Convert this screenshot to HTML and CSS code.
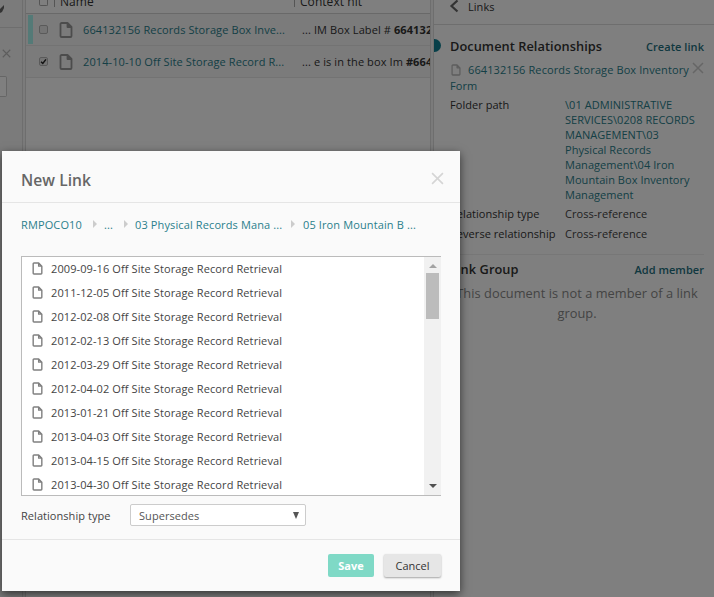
FILE: index.html
```html
<!DOCTYPE html>
<html lang="en">
<head>
<meta charset="utf-8">
<title>New Link</title>
<link rel="stylesheet" href="styles.css">
</head>
<body>
<svg class="defs" width="0" height="0">
  <symbol id="doc" viewBox="0 0 14 16">
    <path d="M2.5 1h6L12.5 5v9a1 1 0 0 1-1 1h-9a1 1 0 0 1-1-1V2a1 1 0 0 1 1-1z M8.5 1v4h4" fill="none" stroke="currentColor" stroke-width="1.8" stroke-linejoin="round"/>
  </symbol>
  <symbol id="x" viewBox="0 0 12 12">
    <path d="M1 1l10 10M11 1L1 11" fill="none" stroke="currentColor" stroke-width="1.5"/>
  </symbol>
</svg>
<div class="app">
  <aside class="rail">
    <div class="rail-top"><svg class="rail-glyph" viewBox="3 0 5 10"><path d="M7 0L3 4 1 9l4-2 2-4z" fill="currentColor"/></svg></div>
    <div class="rail-body">
      <svg class="rail-x"><use href="#x"/></svg>
      <div class="rail-input"></div>
    </div>
  </aside>
  <main class="results">
    <div class="results-head">
      <span class="head-check"></span>
      <span class="head-name">Name</span>
      <span class="head-hit">Context hit</span>
    </div>
    <div class="row">
      <span class="row-mark row-mark-on"></span>
      <span class="check"></span>
      <svg class="row-doc"><use href="#doc"/></svg>
      <a class="row-name">664132156 Records Storage Box Inve...</a>
      <span class="row-hit">... IM Box Label # <b>664132</b></span>
    </div>
    <div class="row">
      <span class="row-mark"></span>
      <span class="check check-on"><svg viewBox="0 0 8 8"><path d="M1.2 4.2l2 2 3.6-4.6" fill="none" stroke="currentColor" stroke-width="1.7"/></svg></span>
      <svg class="row-doc"><use href="#doc"/></svg>
      <a class="row-name">2014-10-10 Off Site Storage Record R...</a>
      <span class="row-hit">... e is in the box Im <b>#664</b></span>
    </div>
  </main>
  <section class="links">
    <header class="links-head">
      <svg class="chev" viewBox="0 0 10 14"><path d="M8.5 1.5L2.5 7l6 5.5" fill="none" stroke="currentColor" stroke-width="2.2"/></svg>
      <span>Links</span>
    </header>
    <span class="links-dot"></span>
    <div class="section-head section-first">
      <h2>Document Relationships</h2>
      <a class="action">Create link</a>
    </div>
    <div class="linked">
      <svg class="linked-doc"><use href="#doc"/></svg><a>664132156 Records Storage Box Inventory Form</a>
      <svg class="linked-x"><use href="#x"/></svg>
    </div>
    <dl class="props">
      <dt>Folder path</dt>
      <dd class="prop-link">\01 ADMINISTRATIVE SERVICES\0208 RECORDS MANAGEMENT\03 Physical Records Management\04 Iron Mountain Box Inventory Management</dd>
      <dt>Relationship type</dt>
      <dd>Cross-reference</dd>
      <dt>Reverse relationship</dt>
      <dd>Cross-reference</dd>
    </dl>
    <div class="section-head section-second">
      <h2>Link Group</h2>
      <a class="action">Add member</a>
    </div>
    <p class="empty">This document is not a member of a link group.</p>
  </section>
</div>
<div class="scrim"></div>
<div class="modal">
  <div class="modal-head">
    <h1>New Link</h1>
    <svg class="modal-x"><use href="#x"/></svg>
  </div>
  <div class="modal-body">
    <nav class="crumbs">
      <a class="crumb-1">RMPOCO10</a><i class="sep"></i>
      <a class="crumb-2">...</a><i class="sep"></i>
      <a class="crumb-3">03 Physical Records Mana ...</a><i class="sep sep-last"></i>
      <a>05 Iron Mountain B ...</a>
    </nav>
    <div class="picker">
      <ul class="files">
        <li><svg><use href="#doc"/></svg>2009-09-16 Off Site Storage Record Retrieval</li>
        <li><svg><use href="#doc"/></svg>2011-12-05 Off Site Storage Record Retrieval</li>
        <li><svg><use href="#doc"/></svg>2012-02-08 Off Site Storage Record Retrieval</li>
        <li><svg><use href="#doc"/></svg>2012-02-13 Off Site Storage Record Retrieval</li>
        <li><svg><use href="#doc"/></svg>2012-03-29 Off Site Storage Record Retrieval</li>
        <li><svg><use href="#doc"/></svg>2012-04-02 Off Site Storage Record Retrieval</li>
        <li><svg><use href="#doc"/></svg>2013-01-21 Off Site Storage Record Retrieval</li>
        <li><svg><use href="#doc"/></svg>2013-04-03 Off Site Storage Record Retrieval</li>
        <li><svg><use href="#doc"/></svg>2013-04-15 Off Site Storage Record Retrieval</li>
        <li><svg><use href="#doc"/></svg>2013-04-30 Off Site Storage Record Retrieval</li>
      </ul>
      <div class="scrollbar">
        <span class="arrow-up"></span>
        <span class="thumb"></span>
        <span class="arrow-down"></span>
      </div>
    </div>
    <div class="type-row">
      <span class="type-label">Relationship type</span>
      <div class="select"><span>Supersedes</span><i class="caret"></i></div>
    </div>
  </div>
  <div class="modal-foot">
    <button class="btn btn-save" type="button">Save</button>
    <button class="btn btn-cancel" type="button">Cancel</button>
  </div>
</div>
</body>
</html>
```

FILE: styles.css
```css
* { box-sizing: border-box; }
html, body { margin: 0; height: 100%; overflow: hidden; }
body { font-family: "Open Sans", sans-serif; font-size: 11px; letter-spacing: .05px; color: #333; background: #fff; position: relative; }
.defs { position: absolute; }
a { color: #2a7f8c; }

.app { display: flex; height: 597px; background: #f6f6f6; }

.rail { width: 23px; flex: none; border-right: 1px solid #ddd; }
.rail-top { height: 28px; border-bottom: 1px solid #ddd; padding: 5px 0 0; overflow: hidden; }
.rail-glyph { display: block; width: 5px; height: 10px; color: #666; }
.rail-body { padding-top: 21px; }
.rail-x { display: block; width: 9px; height: 9px; margin-left: 2px; color: #bbb; }
.rail-input { width: 7px; height: 21px; margin-top: 18px; background: #fff; border: 1px solid #ccc; border-left: 0; border-radius: 0 2px 2px 0; }

.results { width: 406px; flex: none; margin-left: 2px; border-left: 1px solid #ddd; border-right: 1px solid #ddd; background: #fff; }
.results-head { height: 14px; display: flex; align-items: flex-start; border-bottom: 1px solid #d2d2d2; font-size: 12px; overflow: hidden; }
.head-check { width: 9px; height: 6px; margin-left: 13px; border: 1px solid #aaa; border-top: 0; border-radius: 0 0 2px 2px; flex: none; }
.head-name { width: 240px; height: 7px; margin-left: 6px; padding-left: 5px; border-left: 1px solid #aaa; }
.head-hit { height: 7px; padding-left: 5px; border-left: 1px solid #aaa; white-space: nowrap; }
.head-name, .head-hit { line-height: 4px; }

.row { height: 32px; display: flex; align-items: center; border-bottom: 1px solid #e6e6e6; background: #f6f6f6; white-space: nowrap; overflow: hidden; letter-spacing: .1px; }
.row-mark { width: 5px; height: 29px; margin-left: 2px; flex: none; }
.row-mark-on { background: #a8f5ee; }
.check { width: 9px; height: 9px; margin-left: 6px; flex: none; border: 1px solid #b5b5b5; background: #e8e8e8; border-radius: 2px; display: block; }
.check-on { color: #222; }
.check-on svg { display: block; width: 7px; height: 7px; }
.row-doc { width: 14px; height: 16px; margin-left: 11px; flex: none; color: #999; }
.row-name { width: 219px; margin-left: 10px; flex: none; color: #2a7f8c; }
.row-hit { color: #333; }
.row-hit b { font-weight: 700; }

.links { flex: 1; min-width: 0; position: relative; margin-left: 2px; border-left: 1px solid #ddd; background: #fff; padding: 0 10px 0 16px; }
.links-head { height: 25px; margin: 0 -10px 0 -16px; padding: 0 0 12px 15px; display: flex; align-items: center; gap: 9px; border-bottom: 1px solid #ddd; }
.chev { width: 10px; height: 14px; color: #666; flex: none; }
.links-dot { position: absolute; left: 0; top: 39px; width: 7px; height: 13px; background: #0f7f92; border-radius: 0 7px 7px 0; }
.section-head { display: flex; justify-content: space-between; align-items: baseline; }
.section-first { margin-top: 12px; }
.section-head h2 { margin: 0; font-size: 12.8px; line-height: 18px; font-weight: 600; color: #333; }
.action { font-weight: 600; color: #1e7080; }
.linked { position: relative; margin-top: 7px; line-height: 16px; padding-right: 12px; letter-spacing: .1px; }
.linked a { color: #2a7f8c; }
.linked-doc { display: inline-block; width: 10px; height: 12px; margin: 0 7px 0 1px; vertical-align: -2px; color: #bbb; }
.linked-x { position: absolute; right: 0; top: 0; width: 12px; height: 12px; color: #ccc; }
.props { margin: 3px 0 0; display: grid; grid-template-columns: 115px 1fr; line-height: 15px; row-gap: 5px; }
.props dt { color: #333; }
.props dd { margin: 0; color: #444; }
.props .prop-link { margin-bottom: -1px; padding-right: 6px; color: #2a7f8c; }
.section-second { margin-top: 13px; padding-top: 5px; border-top: 1px solid #eee; }
.empty { margin: 5px 0 0; text-align: center; font-size: 12.8px; line-height: 20px; color: #888; }

.scrim { position: absolute; inset: 0; background: rgba(0, 0, 0, .5); }

.modal { position: absolute; left: 2px; top: 151px; width: 458px; height: 440px; background: #fafafa; box-shadow: 0 3px 9px rgba(0, 0, 0, .6); display: flex; flex-direction: column; }
.modal-head { height: 52px; flex: none; display: flex; justify-content: space-between; align-items: flex-start; padding: 0 16px 0 19px; border-bottom: 1px solid #e5e5e5; }
.modal-head h1 { margin: 18px 0 0; font-size: 15.6px; line-height: 22px; font-weight: 600; color: #666; }
.modal-x { width: 13px; height: 13px; margin-top: 21px; color: #d5d5d5; }
.modal-body { flex: 1; min-height: 0; padding: 0 19px; }
.crumbs { height: 44px; padding-bottom: 2px; display: flex; align-items: center; white-space: nowrap; letter-spacing: .12px; }
.crumbs a { color: #2a7f8c; flex: none; }
.crumb-1 { width: 61px; }
.crumb-2 { width: 9px; }
.crumb-3 { width: 148px; }
.sep { width: 0; height: 0; margin: 0 7px 0 11px; border-left: 4px solid #ccc; border-top: 4px solid transparent; border-bottom: 4px solid transparent; flex: none; }
.sep-last { margin: 0 8px; }
.picker { display: flex; height: 240px; margin-top: 9px; border: 1px solid #bbb; border-right: 0; background: #fff; overflow: hidden; }
.files { flex: 1; min-width: 0; list-style: none; margin: -1px 0 0; padding: 0; overflow: hidden; letter-spacing: .1px; }
.files li { height: 24px; display: flex; align-items: center; padding-left: 10px; white-space: nowrap; color: #444; }
.files svg { width: 11px; height: 13px; margin-right: 8px; color: #808080; flex: none; }
.scrollbar { width: 17px; flex: none; background: #f1f1f1; display: flex; flex-direction: column; align-items: center; padding: 0 2px; }
.arrow-up { margin-top: 7px; width: 0; height: 0; border-left: 4px solid transparent; border-right: 4px solid transparent; border-bottom: 4px solid #a3a3a3; }
.thumb { width: 100%; height: 46px; margin-top: 5px; background: #bcbcbc; }
.arrow-down { margin-top: auto; margin-bottom: 7px; width: 0; height: 0; border-left: 4px solid transparent; border-right: 4px solid transparent; border-top: 4px solid #505050; }
.type-row { display: flex; align-items: center; margin-top: 8px; }
.type-label { width: 109px; color: #444; flex: none; }
.select { width: 176px; height: 22px; display: flex; align-items: center; justify-content: space-between; padding: 0 6px 0 8px; border: 1px solid #ccc; border-radius: 2px; background: #fff; color: #555; }
.caret { width: 0; height: 0; border-left: 3.5px solid transparent; border-right: 3.5px solid transparent; border-top: 7px solid #555; }
.modal-foot { height: 52px; flex: none; display: flex; justify-content: flex-end; gap: 10px; padding: 14px 19px 0 0; border-top: 1px solid #e5e5e5; }
.btn { height: 23px; padding: 0; border: 0; border-radius: 2px; font: 600 11px "Open Sans", sans-serif; }
.btn-save { width: 46px; background: #7fd9c6; color: #fff; font-weight: 700; }
.btn-cancel { width: 57px; background: #e6e6e6; color: #333; font-weight: 400; box-shadow: 0 1px 2px rgba(0, 0, 0, .35); }
```
